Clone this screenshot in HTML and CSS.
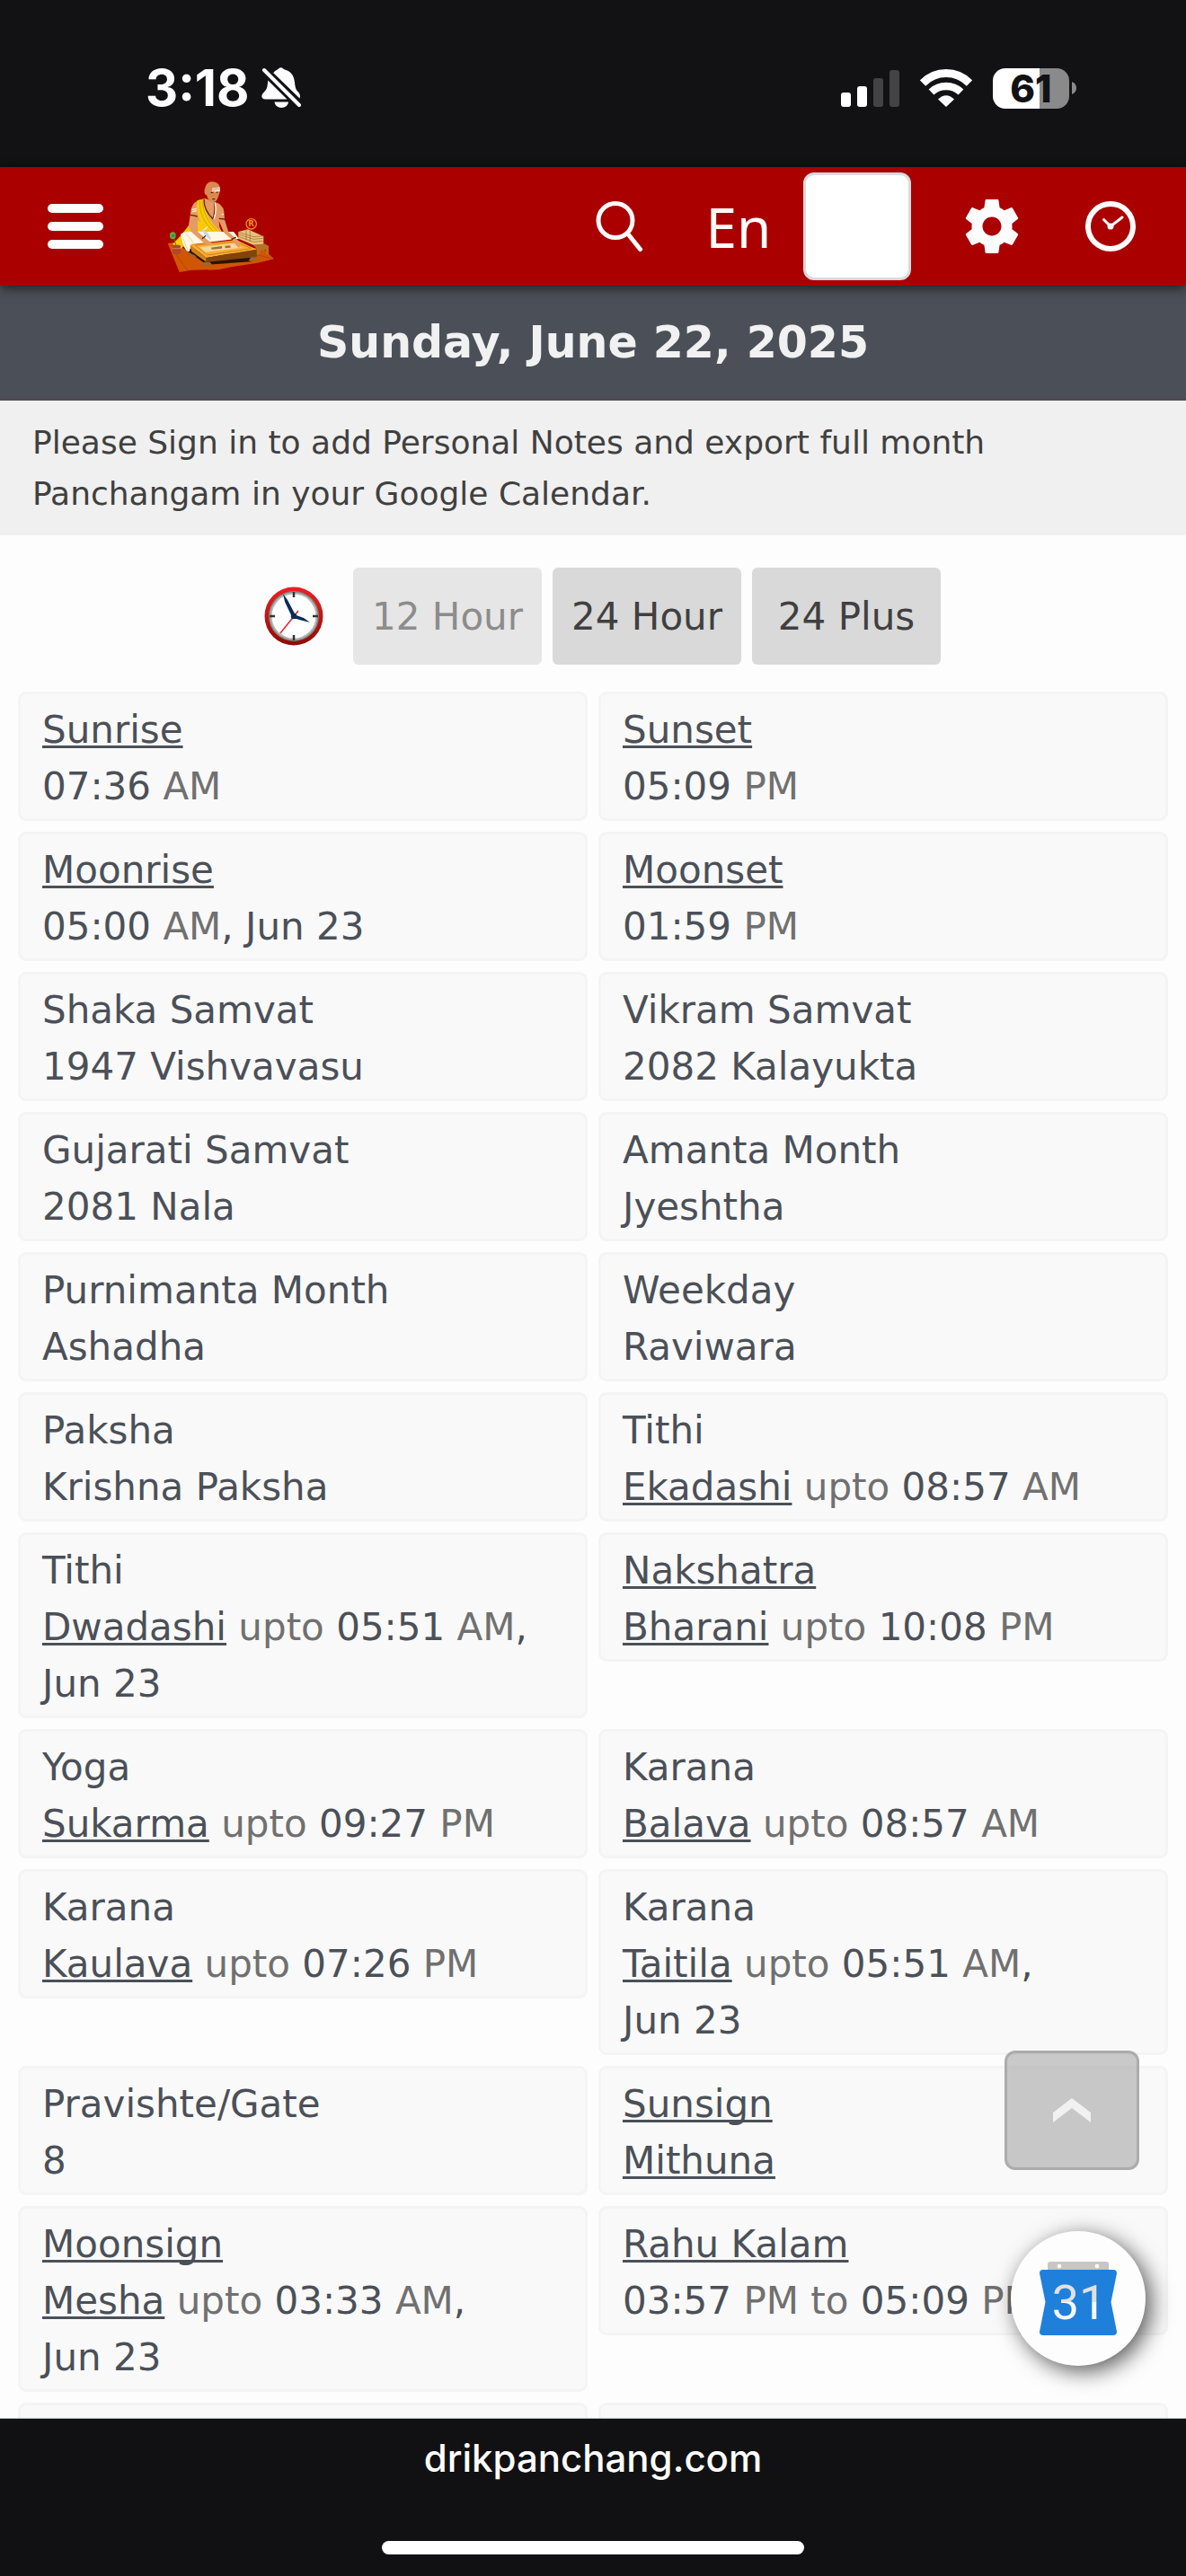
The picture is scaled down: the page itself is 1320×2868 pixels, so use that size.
FILE: index.html
```html
<!DOCTYPE html>
<html lang="en">
<head>
<meta charset="utf-8">
<meta name="viewport" content="width=device-width, initial-scale=1">
<title>Drik Panchang</title>
<link rel="stylesheet" href="styles.css">
</head>
<body>
<div class="status">
  <span class="status-time">3:18</span>
  <svg class="bell" width="44" height="48" viewBox="0 0 44 48" aria-hidden="true">
    <g fill="#fff">
      <path d="M13 7.500C15 4.500 18 3.800 19.300 2.300Q21.500 0 24 2.300C26 4.200 31 4 34.500 9.500C38.500 17 36 23 40 27.500C43 30.500 43.500 32.500 42.500 35.500L12.500 6.500Z"/>
      <path d="M7.300 15.500L28.500 36.500H4.500C-.5 36.500-.5 32 2 29.500C7 25 6.500 22 7.300 15.500Z"/>
      <path d="M14.500 39.500H30C29 48 15.500 48 14.500 39.500Z"/>
    </g>
    <path d="M3 4L42 43" stroke="#fff" stroke-width="4" stroke-linecap="round"/>
  </svg>
  <span class="status-spacer"></span>
  <svg width="66" height="42" viewBox="0 0 66 42" aria-hidden="true">
    <rect y="26" width="11" height="16" rx="3" fill="#fff"/>
    <rect x="18" y="19" width="11" height="23" rx="3" fill="#fff"/>
    <rect x="36" y="10" width="11" height="32" rx="3" fill="#434345"/>
    <rect x="54" y="1" width="11" height="41" rx="3" fill="#434345"/>
  </svg>
  <svg class="wifi" width="58" height="42" viewBox="0 0 58 42" aria-hidden="true">
    <g fill="none" stroke="#fff">
      <path d="M3 15.500Q14 4.500 29 4.500T55 15.500" stroke-width="9"/>
      <path d="M12.500 25.500Q19.500 19 29 19T45.500 25.500" stroke-width="8.500"/>
    </g>
    <path d="M20 33.500Q29 25 38 33.500L29 42Z" fill="#fff"/>
  </svg>
  <div class="battery"><span>61</span></div>
  <svg class="battery-tip" width="5" height="14" viewBox="0 0 5 14" aria-hidden="true"><path d="M0 0Q5 2 5 7T0 14Z" fill="#8a8a8b"/></svg>
</div>

<header class="topbar">
  <button class="menu" aria-label="Menu"><span></span><span></span><span></span></button>
  <a class="logo" href="#" aria-label="Drik Panchang">
    <svg width="120" height="103" viewBox="558 91 360 309" aria-hidden="true">
      <path d="M560 301L640 290L880 320L915 353L860 366L770 380Q730 392 690 389L640 390L599 397Z" fill="#d15604"/>
      <path d="M575 306Q590 350 628 392M862 340L908 352" stroke="#a53f00" stroke-width="2" fill="none"/>
      <path d="M606 312L690 372L840 362L858 340L700 330Z" fill="#2c1205"/>
      <path d="M796 262L828 254L880 278V305L846 306L796 285Z" fill="#e8c37c"/>
      <path d="M796 263L846 279L880 276M796 270L846 287L880 284M796 278L846 296L880 293M822 256V290M835 257V295" stroke="#9a6a28" stroke-width="2" fill="none"/>
      <path d="M846 307L882 302L897 309V338H887V322L868 325V338H857V318Z" fill="#b57224"/>
      <path d="M576 304Q612 270 640 225L650 180L665 156L690 154L740 262L640 270L606 318Z" fill="#f8ca08"/>
      <path d="M603 270Q620 258 660 261L780 262L798 285L640 304L632 328Q614 330 603 270Z" fill="#fff7e1"/>
      <path d="M612 285Q620 310 628 325M620 270Q640 285 645 300" stroke="#cbbf9d" stroke-width="2" fill="none"/>
      <path d="M684 150L716 163Q744 168 748 195L750 222L763 263L792 288L803 302L799 315L784 308L776 290L748 265L731 226L734 262L686 262L676 235L660 222V262L700 296L708 305L690 305L672 292L636 260L630 240L636 200Q638 170 660 158Z" fill="#e69a63"/>
      <path d="M659 157L681 155Q682 210 734 262L690 262Q660 225 657 180Z" fill="#f8ca08"/>
      <path d="M667 160Q665 220 712 260M675 158Q678 215 724 258" stroke="#c99500" stroke-width="2" fill="none"/>
      <path d="M686 112Q690 95 711 95Q736 97 735 125L729 145Q722 164 711 165Q696 162 690 140Q680 138 683 120Z" fill="#d98a50"/>
      <path d="M709 116L734 113V128L708 129Z" fill="#f8e1d2"/>
      <path d="M712 125L733 118M710 120L727 115" stroke="#e57f50" stroke-width="2"/>
      <path d="M704 132L713 130M722 131L728 130M709 153H718" stroke="#321309" stroke-width="3"/>
      <path d="M681 153Q680 190 712 220M716 162Q720 190 711 221M634 206Q645 206 659 211M731 218L751 220" stroke="#612713" stroke-width="4" fill="none"/>
      <path d="M717 163Q725 190 714 221M641 188L657 185M642 195L657 192M740 204H747M682 255L692 246" stroke="#fff3e4" stroke-width="4" fill="none"/>
      <path d="M675 285Q684 280 687 274M773 288L788 280" stroke="#4c1c10" stroke-width="4"/>
      <path d="M634 306L790 290L857 321L689 349Z" fill="#f9ae37"/>
      <path d="M634 306L689 349V363L640 328Z" fill="#d38112"/>
      <path d="M689 349L857 321V347L689 363Z" fill="#84430a"/>
      <path d="M652 307L784 295L840 318L692 340Z" fill="none" stroke="#ce8215" stroke-width="3"/>
      <path d="M667 314L783 301L808 315L686 330Z" fill="#f3d79b"/>
      <path d="M704 315L742 310L741 318L708 321ZM751 309L769 308L770 315L752 317Z" fill="#9a7138"/>
      <path d="M672 289Q690 282 709 303L690 307ZM778 290Q800 287 803 305L799 317L787 306Z" fill="#e69a63"/>
      <path d="M673 252Q698 260 706 291Q682 278 673 252Z" fill="#cbd4df"/>
      <path d="M682 363H701L709 374Q690 380 674 374ZM838 347H855L863 359Q845 365 830 359ZM632 333L648 339L656 345Q636 348 625 342Z" fill="#a26428"/>
      <path d="M577 309Q590 302 604 309L602 316Q610 338 592 338Q570 338 577 317Z" fill="#ac482b"/>
      <path d="M576 318H605" stroke="#dd7b59" stroke-width="3"/>
      <path d="M587 306L578 275" stroke="#54791f" stroke-width="3"/>
      <ellipse cx="577" cy="275" rx="10" ry="12" fill="#6cac30"/>
      <circle cx="578" cy="275" r="5" fill="#168a9f"/>
      <circle cx="839" cy="236" r="17" fill="none" stroke="#ee8a1e" stroke-width="4"/>
      <text class="logo-mark" x="839" y="245" text-anchor="middle">R</text>
    </svg>
  </a>
  <nav class="tools" aria-label="Tools">
    <button class="tool" aria-label="Search">
      <svg width="54" height="58" viewBox="0 0 54 58" fill="none" stroke="#fdfdfd" aria-hidden="true"><circle cx="22" cy="22.500" r="19" stroke-width="5"/><path d="M35.500 37L49.500 54.500" stroke-width="5" stroke-linecap="round"/></svg>
    </button>
    <button class="tool tool-lang">En</button>
    <button class="tool" aria-label="Theme"><span class="swatch"></span></button>
    <button class="tool tool-gear" aria-label="Settings">
      <svg width="72" height="72" viewBox="0 0 24 24" fill="#fdfdfd" aria-hidden="true"><path d="M19.430 12.980c.04-.32.07-.64.07-.98s-.03-.66-.07-.98l2.110-1.650c.19-.15.24-.42.12-.64l-2-3.460c-.12-.22-.39-.3-.61-.22l-2.490 1c-.52-.4-1.080-.73-1.690-.98l-.38-2.650C14.460 2.180 14.250 2 14 2h-4c-.25 0-.46.18-.49.42l-.38 2.650c-.61.25-1.170.59-1.690.98l-2.490-1c-.23-.09-.49 0-.61.22l-2 3.460c-.13.22-.07.49.12.64l2.110 1.650c-.04.32-.07.65-.07.98s.03.66.07.98l-2.110 1.650c-.19.15-.24.42-.12.64l2 3.460c.12.22.39.3.61.22l2.490-1c.52.4 1.080.73 1.690.98l.38 2.650c.03.24.24.42.49.42h4c.25 0 .46-.18.49-.42l.38-2.650c.61-.25 1.170-.59 1.690-.98l2.490 1c.23.09.49 0 .61-.22l2-3.460c.12-.22.07-.49-.12-.64l-2.110-1.650zM12 15.500c-1.930 0-3.500-1.570-3.500-3.500s1.570-3.500 3.500-3.500 3.500 1.570 3.500 3.500-1.570 3.500-3.500 3.500z"/></svg>
    </button>
    <button class="tool" aria-label="Time">
      <svg width="56" height="56" viewBox="0 0 56 56" fill="none" stroke="#fdfdfd" aria-hidden="true"><circle cx="28" cy="28" r="25" stroke-width="6"/><path d="M20.500 20.500L28 28L41 18" stroke-width="3" stroke-linecap="round"/><circle cx="28" cy="28" r="3.500" fill="#fdfdfd" stroke="none"/></svg>
    </button>
  </nav>
</header>

<main class="page">
  <h1 class="date">Sunday, June 22, 2025</h1>
  <p class="notice">Please Sign in to add Personal Notes and export full month Panchangam in your Google Calendar.</p>
  <div class="formats">
    <svg class="clock" width="66" height="66" viewBox="0 0 66 66" aria-hidden="true">
      <defs>
        <linearGradient id="rim" x1="0" y1="0" x2="0" y2="1"><stop offset="0" stop-color="#ee2024"/><stop offset="1" stop-color="#8e0c05"/></linearGradient>
      </defs>
      <circle cx="33" cy="33" r="32.500" fill="url(#rim)"/>
      <circle cx="33" cy="33" r="28" fill="#858580"/>
      <circle cx="33" cy="33" r="26.500" fill="#b4b4b2"/>
      <circle cx="33" cy="33" r="24.500" fill="#fff"/>
      <path d="M33 6V12M33 54V60M6 33H12M54 33H60" stroke="#333" stroke-width="2.500"/>
      <path d="M38 27L18 52" stroke="#e8202a" stroke-width="1.500"/>
      <path d="M21 8L26 15L35 32L31 34L23 17ZM33 31L44 35L51 40L43 38L32 35Z" fill="#0b2c57"/>
      <circle cx="33" cy="33" r="3.200" fill="#0b2c57"/>
    </svg>
    <button class="format" disabled>12 Hour</button>
    <button class="format">24 Hour</button>
    <button class="format">24 Plus</button>
  </div>

  <dl class="cards">
    <div class="card"><dt><a href="#">Sunrise</a></dt><dd>07:36 <i>AM</i></dd></div>
    <div class="card"><dt><a href="#">Sunset</a></dt><dd>05:09 <i>PM</i></dd></div>
    <div class="card"><dt><a href="#">Moonrise</a></dt><dd>05:00 <i>AM</i>, Jun 23</dd></div>
    <div class="card"><dt><a href="#">Moonset</a></dt><dd>01:59 <i>PM</i></dd></div>
    <div class="card"><dt>Shaka Samvat</dt><dd>1947 Vishvavasu</dd></div>
    <div class="card"><dt>Vikram Samvat</dt><dd>2082 Kalayukta</dd></div>
    <div class="card"><dt>Gujarati Samvat</dt><dd>2081 Nala</dd></div>
    <div class="card"><dt>Amanta Month</dt><dd>Jyeshtha</dd></div>
    <div class="card"><dt>Purnimanta Month</dt><dd>Ashadha</dd></div>
    <div class="card"><dt>Weekday</dt><dd>Raviwara</dd></div>
    <div class="card"><dt>Paksha</dt><dd>Krishna Paksha</dd></div>
    <div class="card"><dt>Tithi</dt><dd><a href="#">Ekadashi</a> <i>upto</i> 08:57 <i>AM</i></dd></div>
    <div class="card"><dt>Tithi</dt><dd><a href="#">Dwadashi</a> <i>upto</i> 05:51 <i>AM</i>,<br>Jun 23</dd></div>
    <div class="card"><dt><a href="#">Nakshatra</a></dt><dd><a href="#">Bharani</a> <i>upto</i> 10:08 <i>PM</i></dd></div>
    <div class="card"><dt>Yoga</dt><dd><a href="#">Sukarma</a> <i>upto</i> 09:27 <i>PM</i></dd></div>
    <div class="card"><dt>Karana</dt><dd><a href="#">Balava</a> <i>upto</i> 08:57 <i>AM</i></dd></div>
    <div class="card"><dt>Karana</dt><dd><a href="#">Kaulava</a> <i>upto</i> 07:26 <i>PM</i></dd></div>
    <div class="card"><dt>Karana</dt><dd><a href="#">Taitila</a> <i>upto</i> 05:51 <i>AM</i>,<br>Jun 23</dd></div>
    <div class="card"><dt>Pravishte/Gate</dt><dd>8</dd></div>
    <div class="card"><dt><a href="#">Sunsign</a></dt><dd><a href="#">Mithuna</a></dd></div>
    <div class="card"><dt><a href="#">Moonsign</a></dt><dd><a href="#">Mesha</a> <i>upto</i> 03:33 <i>AM</i>,<br>Jun 23</dd></div>
    <div class="card"><dt><a href="#">Rahu Kalam</a></dt><dd>03:57 <i>PM to</i> 05:09 <i>PM</i></dd></div>
    <div class="card"></div>
    <div class="card"></div>
  </dl>

  <div class="floating">
    <button class="to-top" aria-label="Back to top">
      <svg width="42" height="27" viewBox="0 0 42 27" aria-hidden="true"><path d="M0 16L21 0L42 16V27L21 11L0 27Z" fill="#f1f1f1"/></svg>
    </button>
    <a class="calendar" href="#" aria-label="Google Calendar">
      <svg width="86" height="82" viewBox="0 0 86 82" aria-hidden="true">
        <defs><linearGradient id="digits" x1="0" y1="0" x2="0" y2="1"><stop offset=".5" stop-color="#e1e1e1"/><stop offset=".5" stop-color="#fafafa"/></linearGradient></defs>
        <path d="M9 10V3Q9 0 12 0H74Q77 0 77 3V10Z" fill="#c6c6c6"/>
        <circle cx="22" cy="5" r="2.300" fill="#fff"/><circle cx="64" cy="5" r="2.300" fill="#fff"/>
        <path d="M4 9H82Q86 9 86 13L79.500 45L86 78Q86 82 82 82H4Q0 82 0 78L6.500 45L0 13Q0 9 4 9Z" fill="#1e80db"/>
        <text class="calendar-day" x="44" y="64" text-anchor="middle" fill="url(#digits)">31</text>
      </svg>
    </a>
  </div>
</main>

<footer class="browser-bar">
  <span class="domain">drikpanchang.com</span>
  <span class="home-bar"></span>
</footer>
</body>
</html>
```
FILE: styles.css
```css
* {
  box-sizing: border-box;
}

body {
  margin: 0;
  height: 100vh;
  display: flex;
  flex-direction: column;
  overflow: hidden;
  background: #fdfdfd;
  color: #4b5058;
  font: 42px/63px Verdana, "DejaVu Sans", sans-serif;
}

button {
  border: 0;
  padding: 0;
  background: none;
  color: inherit;
  font: inherit;
}

svg {
  display: block;
  flex: none;
}

a {
  color: inherit;
  text-decoration: underline 3px;
  text-underline-offset: 3px;
  text-decoration-skip-ink: none;
}

/* Phone status bar */
.status {
  flex: none;
  display: flex;
  align-items: center;
  height: 186px;
  padding: 10px 122px 0 162px;
  background: #121214;
  color: #fff;
  font-family: Inter, sans-serif;
}

.status-time {
  font-size: 56px;
  font-weight: 700;
}

.bell {
  margin-left: 14px;
}

.status-spacer {
  flex: 1;
}

.wifi {
  margin: 0 23px 0 22px;
}

.battery {
  width: 85px;
  height: 45px;
  border-radius: 14px;
  background: linear-gradient(90deg, #fff 52px, #8a8a8b 52px);
  color: #121214;
  font-size: 42px;
  font-weight: 800;
  line-height: 45px;
  text-align: center;
}

.battery-tip {
  margin-left: 3px;
}

/* Site header */
.topbar {
  flex: none;
  position: relative;
  z-index: 1;
  display: flex;
  align-items: center;
  height: 132px;
  padding: 0 18px 0 53px;
  background: #a00;
  box-shadow: 0 3px 12px rgba(0, 0, 0, .6);
}

.menu {
  display: grid;
  gap: 10px;
  width: 62px;
  margin-right: 71px;
}

.menu span {
  height: 10px;
  border-radius: 5px;
  background: #fdfdfd;
}

.logo-mark {
  fill: #ee8a1e;
  font: bold 26px "DejaVu Sans", sans-serif;
}

.tools {
  display: flex;
  margin-left: auto;
}

.tool {
  display: flex;
  align-items: center;
  justify-content: center;
  width: 132px;
  height: 132px;
  color: #fdfdfd;
}

.tool-lang {
  font-family: "Noto Sans", sans-serif;
  font-size: 62px;
}

.tool-gear {
  margin-left: 18px;
}

.swatch {
  width: 120px;
  height: 120px;
  border: 3px solid #d8dadd;
  border-radius: 12px;
  background: #fff;
}

/* Day page */
.page {
  flex: 1;
  min-height: 0;
  position: relative;
  overflow: hidden;
}

.date {
  margin: 0;
  padding: 32px 0 30px;
  border-bottom: 3px solid #504a50;
  background: #4b5058;
  color: #f1f1f1;
  font-size: 49px;
  line-height: 63px;
  text-align: center;
}

.notice {
  margin: 0;
  padding: 18px 36px;
  background: #f0f0f0;
  color: #404040;
  font-size: 36px;
  line-height: 57px;
}

.formats {
  display: flex;
  align-items: center;
  justify-content: center;
  gap: 12px;
  padding: 36px 0 30px 21px;
}

.clock {
  margin-right: 21px;
}

.format {
  width: 210px;
  height: 108px;
  border-radius: 6px;
  background: #d9d9d9;
  color: #404040;
}

.format:disabled {
  background: #e6e6e6;
  color: #8c8c8c;
}

.cards {
  display: grid;
  grid-template-columns: 1fr 1fr;
  align-items: start;
  gap: 12px;
  margin: 0 20px;
}

.card {
  min-height: 144px;
  padding: 8px 0 4px 24px;
  border: 3px solid #f4f4f4;
  border-radius: 9px;
  background: #f9f9f9;
}

.card dd {
  margin: 0;
}

.card i {
  color: #707070;
  font-style: normal;
}

/* Buttons that float over the page */
.floating {
  position: absolute;
  right: 45px;
  bottom: 58px;
  display: grid;
  gap: 68px;
}

.to-top {
  display: flex;
  align-items: center;
  justify-content: center;
  width: 150px;
  height: 133px;
  margin-left: -7px;
  border: 3px solid rgba(150, 150, 150, .55);
  border-radius: 12px;
  background: rgba(160, 160, 160, .56);
}

.calendar {
  display: flex;
  align-items: center;
  justify-content: center;
  width: 150px;
  height: 150px;
  border-radius: 50%;
  background: #fdfdfd;
  box-shadow: 6px 6px 24px rgba(0, 0, 0, .65);
}

.calendar-day {
  font: 54px Roboto, sans-serif;
}

/* Browser bar */
.browser-bar {
  flex: none;
  display: flex;
  flex-direction: column;
  align-items: center;
  justify-content: space-between;
  height: 176px;
  padding: 12px 0 24px;
  border-top: 1px solid #a9b8c0;
  background: #111113;
  color: #fff;
}

.domain {
  font: 500 42px/63px Inter, sans-serif;
}

.home-bar {
  width: 470px;
  height: 15px;
  border-radius: 8px;
  background: #fff;
}
```
